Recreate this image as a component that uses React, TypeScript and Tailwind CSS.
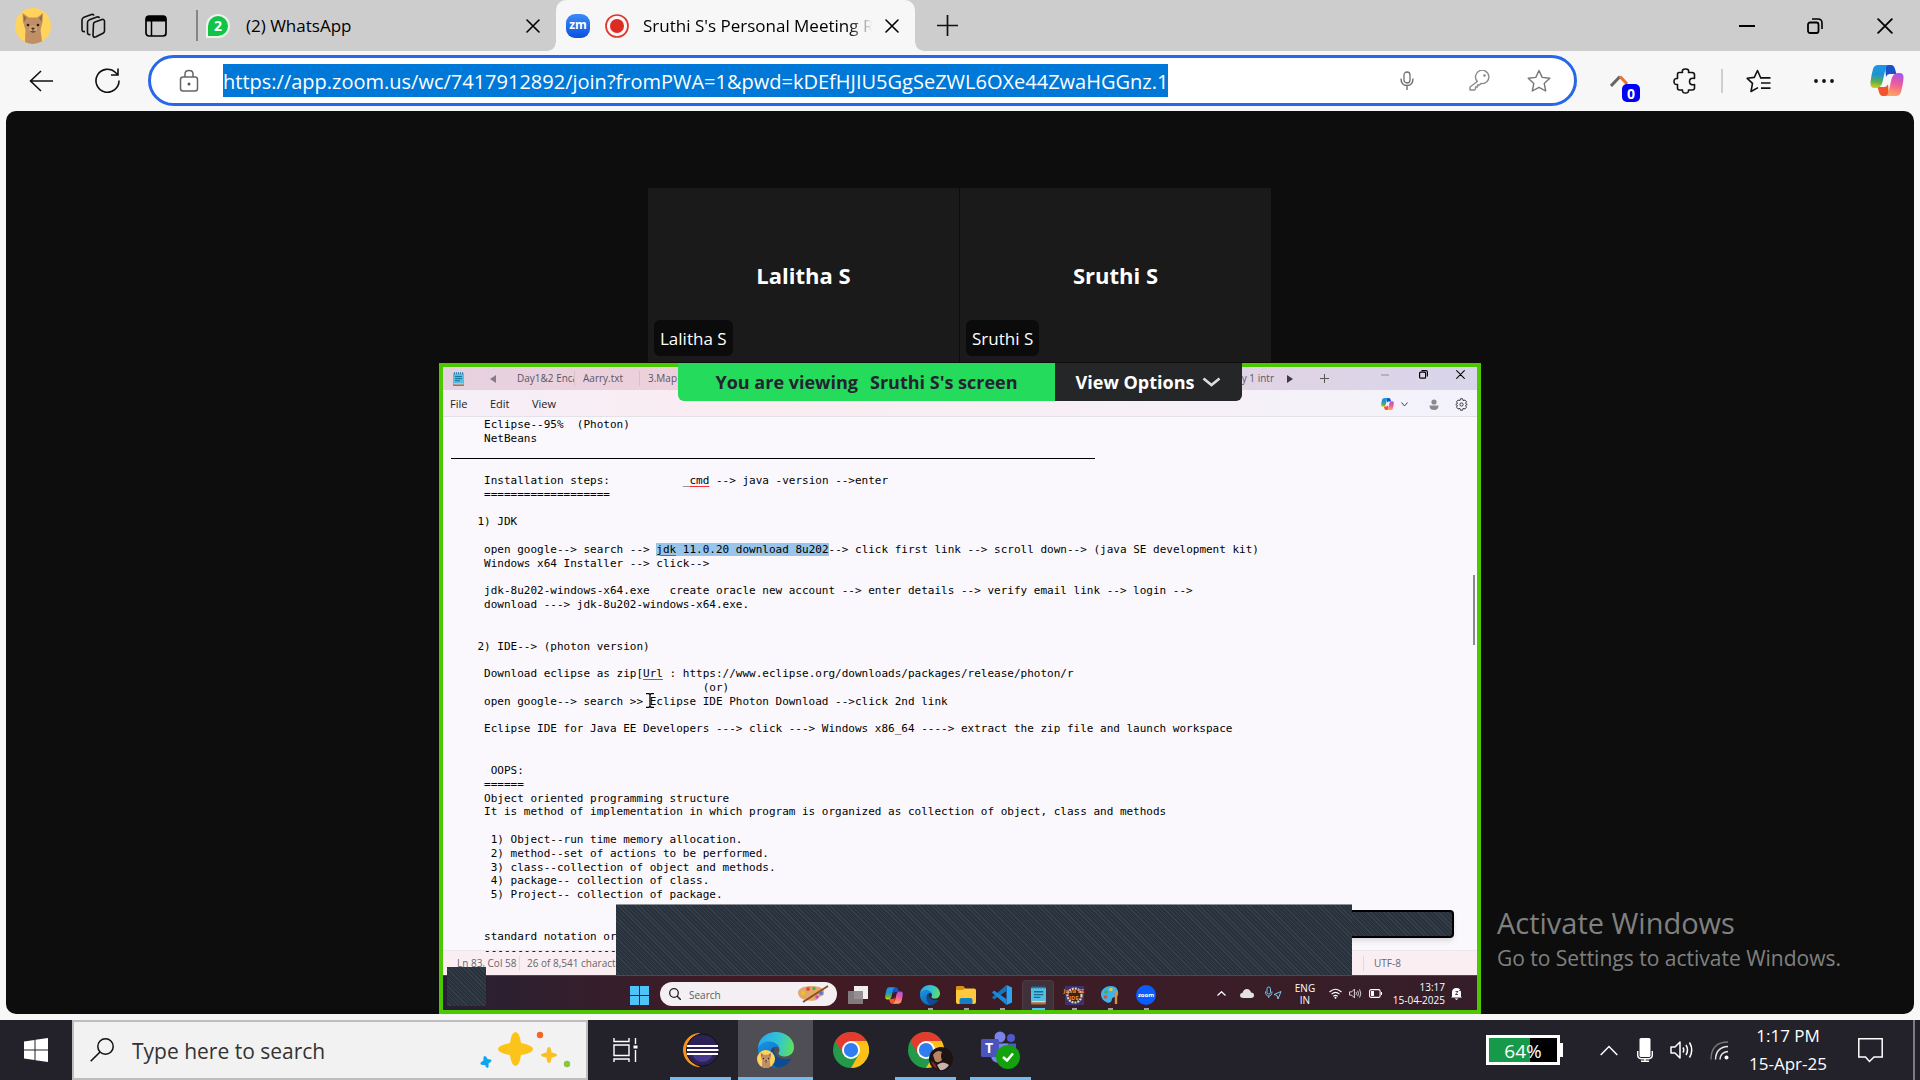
import React from "react";

const sans = "font-['Open_Sans','Noto_Sans',sans-serif]";

function Svg({ w, h, box, children, className = "" }: { w: number; h: number; box?: string; children: React.ReactNode; className?: string }) {
  return (
    <svg width={w} height={h} viewBox={box ?? `0 0 ${w} ${h}`} fill="none" aria-hidden="true" className={`shrink-0 ${className}`}>
      {children}
    </svg>
  );
}

function IconButton({ label, className, children }: { label: string; className: string; children: React.ReactNode }) {
  return (
    <button type="button" aria-label={label} className={`relative flex shrink-0 items-center justify-center self-stretch ${className}`}>
      {children}
    </button>
  );
}

function Cat({ size }: { size: number }) {
  return (
    <Svg w={size} h={size} box="0 0 36 36">
      <circle cx="18" cy="18" r="18" fill="#ffd35c" />
      <path d="M10 34 L10.500 22 L8 14 L7.500 5 L14 9.500 H22 L28 5 L27.500 14 L25.500 22 L27 33.500 Q18 38 10 34Z" fill="#c09064" />
      <path d="M8.500 7 L11.500 10 L9 14Z M27 7 L24 10 L26.500 14Z" fill="#96683f" />
      <ellipse cx="18" cy="21" rx="4" ry="3.500" fill="#cfa37a" />
      <circle cx="13" cy="17" r="1.300" fill="#2b2018" />
      <circle cx="23" cy="17" r="1.300" fill="#2b2018" />
      <path d="M16.500 20 H19.500 L18 21.500Z M18 21 V23 M15.500 23.500 Q18 25 20.500 23.500" stroke="#3b2a1c" strokeWidth=".7" fill="#3b2a1c" />
    </Svg>
  );
}

function Cross({ size, width = 1.6 }: { size: number; width?: number }) {
  return (
    <Svg w={size} h={size} box="0 0 14 14">
      <path d="M1 1 L13 13 M13 1 L1 13" stroke="currentColor" strokeWidth={width} strokeLinecap="round" />
    </Svg>
  );
}

function Copilot({ w, h, id }: { w: number; h: number; id: string }) {
  return (
    <Svg w={w} h={h} box="0 0 34 31">
      <defs>
        <linearGradient id={`${id}a`} x1="8" y1="0" x2="5" y2="24" gradientUnits="userSpaceOnUse">
          <stop stopColor="#1a96ee" />
          <stop offset=".4" stopColor="#1f93d0" />
          <stop offset=".7" stopColor="#5bb04a" />
          <stop offset="1" stopColor="#f6cf12" />
        </linearGradient>
        <linearGradient id={`${id}b`} x1="28" y1="8" x2="22" y2="31" gradientUnits="userSpaceOnUse">
          <stop stopColor="#a457ee" />
          <stop offset=".45" stopColor="#ef5a9c" />
          <stop offset="1" stopColor="#ffa75a" />
        </linearGradient>
      </defs>
      <path d="M15 0 H21 Q24 0 25 4 L26.500 9 H20 Q17 9 16 12Z" fill="#1a50c8" />
      <path d="M19 31 H13 Q10 31 9 27 L7.500 22 H14 Q17 22 18 19Z" fill="#f0552e" />
      <path d="M8 0 H19 Q16.500 0 15.500 4 L12.500 17 Q11 23 6 23 H4 Q0 23 .5 17 Q1.500 9 3 4 Q4.300 0 8 0Z" fill={`url(#${id}a)`} />
      <path d="M26 31 H15 Q17.500 31 18.500 27 L21.500 14 Q23 8 28 8 H30 Q34 8 33.500 14 Q32.500 22 31 27 Q29.700 31 26 31Z" fill={`url(#${id}b)`} />
    </Svg>
  );
}

function Edge({ size, id }: { size: number; id: string }) {
  return (
    <Svg w={size} h={size} box="0 0 36 36">
      <defs>
        <linearGradient id={`${id}t`} x1="1" y1="10" x2="36" y2="18" gradientUnits="userSpaceOnUse">
          <stop stopColor="#2aa9ee" />
          <stop offset=".55" stopColor="#34c6cf" />
          <stop offset="1" stopColor="#62e352" />
        </linearGradient>
        <linearGradient id={`${id}m`} x1="4" y1="12" x2="16" y2="34" gradientUnits="userSpaceOnUse">
          <stop stopColor="#1590dd" />
          <stop offset="1" stopColor="#1268b8" />
        </linearGradient>
      </defs>
      <path d="M0 17 C0 7 8 0 18 0 C28 0 36 7 36 15 C36 21 32 24.500 27 24.500 C23 24.500 20.500 23 20.500 21.500 C20.500 20.500 21.500 20 21.500 18 C21.500 13 16 10 11 10 C5 10 1 13.500 0 17Z" fill={`url(#${id}t)`} />
      <path d="M0 17 C1 12 6 9.500 11 9.500 C16 9.500 20 12 21 15.500 C15 13 12 18 12 22 C12 30 20 33 23 35 C11 39 0 30 0 17Z" fill={`url(#${id}m)`} />
      <path d="M12 22 C12 19 14 16 16.500 15 C14 24 22 29 33 26.500 Q33.500 27 32 29 C29 33 25 35.300 20 35.800 C14 34 12 27 12 22Z" fill="#0d4b93" />
    </Svg>
  );
}

function Chrome() {
  return (
    <Svg w={36} h={36} box="0 0 48 48">
      <circle cx="24" cy="24" r="24" fill="#229a49" />
      <path d="M24 12 H44.800 A24 24 0 0 1 24 48 L34.400 30Z" fill="#fbc116" />
      <path d="M3.200 12 L13.600 30 L24 12 H44.800 A24 24 0 0 0 3.200 12Z" fill="#e33b2e" />
      <circle cx="24" cy="24" r="12" fill="#fff" />
      <circle cx="24" cy="24" r="9.500" fill="#2f7df0" />
    </Svg>
  );
}

function NotepadIcon({ w, h }: { w: number; h: number }) {
  return (
    <Svg w={w} h={h} box="0 0 16 20">
      <rect x="0" y="2" width="16" height="17" rx="1" fill="#53bfe3" />
      <rect x="0" y="17.500" width="16" height="2.500" rx="1" fill="#b5683a" />
      <path d="M1 17.200 H15" stroke="#e8eef2" strokeWidth="1" />
      <path d="M2 0 V3 M5 0 V3 M8 0 V3 M11 0 V3 M14 0 V3" stroke="#1b6c98" strokeWidth="1.300" />
      <path d="M3 6.500 H13 M3 9.500 H13 M3 12.500 H10" stroke="#166a96" strokeWidth="1.400" />
    </Svg>
  );
}

function WhatsAppBadge() {
  return (
    <div className="flex size-6 shrink-0 items-center justify-center rounded-full rounded-bl-none bg-[#eaf5ec]">
      <span className="flex size-5 items-center justify-center rounded-full rounded-bl-sm bg-[#12c445] text-[14px] leading-none font-bold text-white">2</span>
    </div>
  );
}

function TabStrip() {
  return (
    <header className="flex h-[51px] items-center bg-[#cdcdcd] text-black">
      <IconButton label="Profile" className="w-[66px]"><Cat size={36} /></IconButton>
      <IconButton label="Workspaces" className="w-[54px]">
        <Svg w={26} h={26}>
          <g stroke="#111" strokeWidth="1.600" strokeLinejoin="round">
            <path d="M13.500 11 Q13.500 9.500 15 9 L22 6.500 Q24.500 6 24.500 8.500 V18 Q24.500 19.500 23 20.200 L16 23.800 Q13 25 13 22Z" />
            <path d="M10.500 21.500 Q7.500 22 7.500 19.500 V9.500 Q7.500 7.500 9.500 6.700 L17 4 Q19 3.500 19.500 5" />
            <path d="M5 18.500 Q2 19 2 16.500 V7 Q2 5 4 4.200 L11.500 1.500 Q13.500 1 14 2.500" />
          </g>
        </Svg>
      </IconButton>
      <IconButton label="Tab actions" className="w-[72px]">
        <Svg w={22} h={22}>
          <rect x="1" y="1" width="20" height="20" rx="3" stroke="#000" strokeWidth="1.700" />
          <path d="M1 3.500 Q1 1 4 1 H18 Q21 1 21 3.500 V6.500 H1Z" fill="#000" />
          <path d="M6.500 6 V21" stroke="#000" strokeWidth="1.500" />
        </Svg>
      </IconButton>
      <div className="ml-1 h-[31px] w-0.5 bg-[#858585]" />
      <div className="flex w-[358px] items-center self-stretch pl-2">
        <WhatsAppBadge />
        <span className="ml-4 flex-1 truncate text-[17px]">(2) WhatsApp</span>
        <IconButton label="Close tab" className="w-[46px]"><Cross size={14} /></IconButton>
      </div>
      <div className="relative flex w-[359px] items-center self-stretch rounded-t-[10px] bg-[#f7f7f7] pl-2.5">
        <span className="absolute bottom-0 -left-2 size-2 bg-[radial-gradient(circle_at_0_0,transparent_7px,#f7f7f7_8px)]" />
        <span className="absolute -right-2 bottom-0 size-2 bg-[radial-gradient(circle_at_100%_0,transparent_7px,#f7f7f7_8px)]" />
        <span className="flex size-6 items-center justify-center rounded-[9px] bg-linear-to-b from-[#3b8bf5] to-[#0b4fe0] pb-0.5 text-[12px] leading-none font-bold text-white">zm</span>
        <Svg w={24} h={24} className="ml-[15px]">
          <circle cx="12" cy="12" r="11" stroke="#e0352b" strokeWidth="1.700" />
          <circle cx="12" cy="12" r="7" fill="#dc2c22" />
        </Svg>
        <span className="ml-3.5 w-[229px] overflow-hidden mask-r-from-90% text-[17px] whitespace-nowrap">Sruthi S's Personal Meeting Room</span>
        <IconButton label="Close tab" className="w-[40px]"><Cross size={14} /></IconButton>
      </div>
      <IconButton label="New tab" className="w-16">
        <Svg w={21} h={21}><path d="M10.500 0 V21 M0 10.500 H21" stroke="#111" strokeWidth="1.700" /></Svg>
      </IconButton>
      <div className="flex-1" />
      <IconButton label="Minimize" className="w-[66px]"><Svg w={16} h={2}><path d="M0 1 H16" stroke="#000" strokeWidth="2" /></Svg></IconButton>
      <IconButton label="Restore" className="w-[70px]">
        <Svg w={16} h={16}>
          <rect x="1" y="4.500" width="10.500" height="10.500" rx="2" stroke="#000" strokeWidth="1.800" />
          <path d="M5 1 H11 Q15 1 15 5 V11" stroke="#000" strokeWidth="1.600" />
        </Svg>
      </IconButton>
      <IconButton label="Close window" className="w-[70px]"><Cross size={16} /></IconButton>
    </header>
  );
}

function Toolbar() {
  return (
    <div className="flex h-[60px] items-center bg-[#f7f7f7] pr-[3px] pb-px">
      <IconButton label="Back" className="ml-2 w-[66px]">
        <Svg w={24} h={22}><path d="M12 1 L1.500 11 L12 21 M1.500 11 H24" stroke="#111" strokeWidth="1.600" /></Svg>
      </IconButton>
      <IconButton label="Refresh" className="w-[66px]">
        <Svg w={25} h={25}><path d="M24 12.500 A11.500 11.500 0 1 1 20.500 4.500 L22.500 6.500 M23 .5 V7 H16" stroke="#111" strokeWidth="1.600" /></Svg>
      </IconButton>
      <div className="ml-2 flex h-[51px] min-w-0 flex-1 items-center rounded-full border-3 border-[#2668e8] bg-white">
        <IconButton label="Site information" className="w-[72px] pl-1">
          <Svg w={20} h={24}>
            <rect x="1.500" y="8" width="17" height="14" rx="2.500" stroke="#666" strokeWidth="1.500" />
            <path d="M6 8 V5 Q6 1.500 10 1.500 Q14 1.500 14 5 V8" stroke="#666" strokeWidth="1.500" />
            <circle cx="10" cy="15" r="1.500" fill="#555" />
          </Svg>
        </IconButton>
        <input
          aria-label="Address"
          readOnly
          value="https://app.zoom.us/wc/7417912892/join?fromPWA=1&pwd=kDEfHJIU5GgSeZWL6OXe44ZwaHGGnz.1"
          className="h-[33px] min-w-0 [field-sizing:content] bg-[#0078d7] pt-0.5 text-[20px] text-white outline-none"
        />
        <div className="flex-1" />
        <IconButton label="Voice search" className="w-[94px]">
          <Svg w={14} h={19}>
            <rect x="4" y="1" width="6" height="11" rx="3" stroke="#707070" strokeWidth="1.300" />
            <path d="M1 7.500 Q1 14.500 7 14.500 Q13 14.500 13 7.500 M7 14.500 V19" stroke="#707070" strokeWidth="1.400" />
          </Svg>
        </IconButton>
        <IconButton label="Passwords" className="w-[50px]">
          <Svg w={21} h={21}>
            <path d="M8.300 11.500 A6.700 6.700 0 1 1 12 13.500 L10.500 15 H8.500 V17 H6.500 V19 L5.500 20 H1 V17Z" stroke="#8a8a8a" strokeWidth="1.400" strokeLinejoin="round" />
            <circle cx="15.500" cy="5.500" r="1.300" fill="#8a8a8a" />
          </Svg>
        </IconButton>
        <IconButton label="Add to favorites" className="w-[70px]">
          <Svg w={24} h={24}>
            <path d="M12 1.500 L15.200 8.400 L22.800 9.300 L17.200 14.400 L18.700 22 L12 18.300 L5.300 22 L6.800 14.400 L1.200 9.300 L8.800 8.400Z" stroke="#777" strokeWidth="1.400" strokeLinejoin="round" />
          </Svg>
        </IconButton>
      </div>
      <IconButton label="Extension" className="ml-2 w-[68px]">
        <Svg w={18} h={12}>
          <path d="M1 11 L10 1.500" stroke="#666" strokeWidth="3" />
          <path d="M10 1.500 L17 9" stroke="#f07030" strokeWidth="3" />
        </Svg>
        <span className="absolute top-[33px] left-[37px] flex h-[18px] w-[18px] items-center justify-center rounded-[5px] bg-[#0000f5] text-[14px] font-bold text-white">0</span>
      </IconButton>
      <IconButton label="Extensions" className="w-16">
        <Svg w={24} h={26}>
          <path d="M6 4.500 H9.500 Q8.500 1 12.500 1 Q16.500 1 15.500 4.500 H19 Q21.500 4.500 21.500 7 V10.500 Q16.500 9.500 16.500 13.500 Q16.500 17.500 21.500 16.500 V20 Q21.500 22 19 22 H15.500 Q16 25 12.500 25 Q9 25 9.500 22 H6.500 Q4.500 22 4.500 20 V16.500 Q1 17 1 13.500 Q1 10 4.500 10.500 V6.500 Q4.500 4.500 6 4.500Z" stroke="#111" strokeWidth="1.600" strokeLinejoin="round" />
        </Svg>
      </IconButton>
      <div className="mx-1 h-6 w-0.5 bg-[#cfcfcf]" />
      <IconButton label="Favorites" className="w-16">
        <Svg w={26} h={24}>
          <path d="M14.500 8.500 L11.500 1.500 L8.300 8.400 L1.200 9.300 L6.500 14.400 L5 22.500 L12 18.600" stroke="#111" strokeWidth="1.600" strokeLinejoin="round" />
          <path d="M14 8.800 H24.500 M15 14 H24.500 M15 19.200 H24.500" stroke="#111" strokeWidth="1.700" />
        </Svg>
      </IconButton>
      <IconButton label="Settings and more" className="w-[66px]">
        <Svg w={20} h={4}><g fill="#111"><circle cx="2" cy="2" r="1.900" /><circle cx="10" cy="2" r="1.900" /><circle cx="18" cy="2" r="1.900" /></g></Svg>
      </IconButton>
      <IconButton label="Copilot" className="w-[60px]"><Copilot w={34} h={31} id="main" /></IconButton>
    </div>
  );
}

function Tile({ name }: { name: string }) {
  return (
    <div className="relative flex h-[174px] w-[311px] items-center justify-center bg-[#1a1a1a] text-white">
      <span className="text-[22px] font-bold">{name}</span>
      <span className="absolute bottom-1.5 left-1.5 flex h-9 items-center rounded-md bg-[#0b0b0b] px-1.5 pt-0.5 text-[17px]">{name}</span>
    </div>
  );
}

const squiggle = "underline decoration-red-500 decoration-1 underline-offset-2";

const lines: React.ReactNode[] = [
  "     Eclipse--95%  (Photon)",
  "     NetBeans",
  <span key="r" className="block h-3 w-[644px] border-b border-black" />,
  "",
  <React.Fragment key="c">{"     Installation steps:           _"}<span className={squiggle}>cmd</span>{" --> java -version -->enter"}</React.Fragment>,
  "     ===================",
  "",
  "    1) JDK",
  "",
  <React.Fragment key="j">{"     open google--> search --> "}<span className="bg-[#99c5ea]"><span className={squiggle}>jdk</span> 11.0.20 download 8u202</span>{"--> click first link --> scroll down--> (java SE development kit)"}</React.Fragment>,
  "     Windows x64 Installer --> click-->",
  "",
  "     jdk-8u202-windows-x64.exe   create oracle new account --> enter details --> verify email link --> login -->",
  "     download ---> jdk-8u202-windows-x64.exe.",
  "",
  "",
  "    2) IDE--> (photon version)",
  "",
  <React.Fragment key="u">{"     Download eclipse as zip["}<span className={squiggle}>Url</span>{" : https://www.eclipse.org/downloads/packages/release/photon/r"}</React.Fragment>,
  "                                      (or)",
  "     open google--> search >> Eclipse IDE Photon Download -->click 2nd link",
  "",
  "     Eclipse IDE for Java EE Developers ---> click ---> Windows x86_64 ----> extract the zip file and launch workspace",
  "",
  "",
  "      OOPS:",
  "     ======",
  "     Object oriented programming structure",
  "     It is method of implementation in which program is organized as collection of object, class and methods",
  "",
  "      1) Object--run time memory allocation.",
  "      2) method--set of actions to be performed.",
  "      3) class--collection of object and methods.",
  "      4) package-- collection of class.",
  "      5) Project-- collection of package.",
  "",
  "",
  "     standard notation or",
  "     ---------------------",
];

const hatch = "bg-[repeating-linear-gradient(45deg,#28313c_0,#28313c_2px,#36404b_2px,#36404b_3px)]";

function Banner() {
  return (
    <div className="absolute -top-1 left-[235px] z-10 flex h-[38px] overflow-hidden rounded-b-md text-[18px] font-bold whitespace-nowrap">
      <p className="flex w-[377px] items-center justify-center gap-3 bg-[#24db5b] text-[#232333]">
        <span>You are viewing</span>
        <span>Sruthi S's screen</span>
      </p>
      <button type="button" className="flex w-[187px] items-center justify-center gap-2 bg-[#242628] text-white">
        View Options
        <Svg w={19} h={10}><path d="M1.500 1.500 L9.500 8 L17.500 1.500" stroke="#ddd" strokeWidth="2.600" /></Svg>
      </button>
    </div>
  );
}

function NotepadTitle() {
  return (
    <div className="flex h-[23px] items-center bg-linear-to-r from-[#e6d2e0] via-[#efd0d8] via-30% to-[#d9d5ea] text-[10px] text-[#5d5562]">
      <span className="ml-2.5"><NotepadIcon w={11} h={14} /></span>
      <IconButton label="Scroll tabs left" className="ml-4 w-[25px]"><Svg w={6} h={8}><path d="M6 0 V8 L0 4Z" fill="#857b8a" /></Svg></IconButton>
      <span className="ml-3 w-[58px] overflow-hidden border-r border-[#d9bfca] whitespace-nowrap">Day1&amp;2 Enca</span>
      <span className="w-[65px] border-r border-[#d9bfca] pl-2">Aarry.txt</span>
      <span className="pl-2">3.Map</span>
      <span className="flex-1" />
      <span className="mr-2">Day 1 intr</span>
      <IconButton label="Scroll tabs right" className="mr-2 w-4"><Svg w={6} h={8}><path d="M0 0 V8 L6 4Z" fill="#3c3848" /></Svg></IconButton>
      <IconButton label="Add tab" className="mr-[25px] w-9"><Svg w={9} h={9}><path d="M4.500 0 V9 M0 4.500 H9" stroke="#555" /></Svg></IconButton>
      <IconButton label="Minimize" className="w-9 pb-2"><Svg w={8} h={2}><path d="M0 1 H8" stroke="#999" strokeWidth="1.200" /></Svg></IconButton>
      <IconButton label="Restore" className="w-10 pb-2 text-black">
        <Svg w={9} h={9}><rect x=".6" y="2.200" width="6" height="6" rx="1" stroke="#000" strokeWidth="1.200" /><path d="M2.500 .6 H7 Q8.400 .6 8.400 2 V6.500" stroke="#000" strokeWidth="1.100" /></Svg>
      </IconButton>
      <IconButton label="Close" className="w-[34px] pb-2 text-black"><Cross size={9} /></IconButton>
    </div>
  );
}

function NotepadMenu() {
  return (
    <div className="flex h-[27px] items-center border-b border-[#e4e2e8] bg-linear-to-r from-[#f6eff7] via-[#faecf1] via-30% to-[#f3f3fb] pt-0.5 text-[11px] text-[#222]">
      <button type="button" className="ml-[7px] w-10 text-left">File</button>
      <button type="button" className="w-[42px] text-left">Edit</button>
      <button type="button" className="w-10 text-left">View</button>
      <span className="flex-1" />
      <Copilot w={13} h={12} id="np" />
      <IconButton label="Copilot options" className="w-5"><Svg w={7} h={5}><path d="M.5 .5 L3.500 4 L6.500 .5" stroke="#444" /></Svg></IconButton>
      <IconButton label="Account" className="ml-1.5 w-7"><Svg w={10} h={11}><circle cx="5" cy="3" r="2.600" fill="#8b8b8b" /><path d="M.5 6.500 H9.500 Q9.500 11 5 11 Q.5 11 .5 6.500Z" fill="#8b8b8b" /></Svg></IconButton>
      <IconButton label="Settings" className="mr-[3px] w-[26px]">
        <Svg w={13} h={13} box="0 0 12 12">
          <path d="M5 .7 H7 L7.500 2.400 L9.200 1.900 L10.600 3.500 L9.700 5 L11.300 6 L9.700 7 L10.600 8.500 L9.200 10.100 L7.500 9.600 L7 11.300 H5 L4.500 9.600 L2.800 10.100 L1.400 8.500 L2.300 7 L.7 6 L2.300 5 L1.400 3.500 L2.800 1.900 L4.500 2.400Z" stroke="#333" strokeWidth=".9" strokeLinejoin="round" />
          <circle cx="6" cy="6" r="1.500" stroke="#333" strokeWidth=".9" />
        </Svg>
      </IconButton>
    </div>
  );
}

function Slot({ label, children, run = true, active = false }: { label: string; children: React.ReactNode; run?: boolean; active?: boolean }) {
  return (
    <button type="button" aria-label={label} className="relative flex w-9 shrink-0 items-center justify-center self-stretch">
      {active && <span className="absolute inset-x-0.5 top-1 bottom-0 rounded-t border border-b-0 border-[#4d3a44] bg-[#40303a]" />}
      <span className="relative pt-1">{children}</span>
      {run && <span className={active ? "absolute bottom-0 h-0.5 w-[13px] bg-[#4cc2ff]" : "absolute bottom-0 h-0.5 w-[5px] bg-[#a89ca2]"} />}
    </button>
  );
}

function Waves({ w, h, color }: { w: number; h: number; color: string }) {
  return (
    <Svg w={w} h={h} box="0 0 24 20">
      <path d="M1 7 H5 L10 2 V18 L5 13 H1Z" stroke={color} strokeWidth="1.500" strokeLinejoin="round" />
      <path d="M13 7.500 Q14.500 10 13 12.500 M16 5 Q19 10 16 15 M19.500 2.500 Q24 10 19.500 17.500" stroke={color} strokeWidth="1.500" />
    </Svg>
  );
}

function RemoteTaskbar() {
  return (
    <div className="flex h-[35px] items-center border-t border-[#58424c] bg-linear-to-r from-[#272033] via-[#421a23] via-30% to-[#351e29] pl-[178px] text-white">
      <Slot label="Start" run={false}>
        <Svg w={19} h={19}>
          <path d="M0 0 H9 V9 H0Z M10 0 H19 V9 H10Z M0 10 H9 V19 H0Z M10 10 H19 V19 H10Z" fill="#4fc3f7" />
        </Svg>
      </Slot>
      <label className="mt-0.5 mr-[3px] ml-[3px] flex h-6 w-[177px] shrink-0 items-center rounded-full bg-[#f3eff2] pr-2 pl-[9px]">
        <Svg w={12} h={12}><circle cx="5" cy="5" r="4.300" stroke="#222" strokeWidth="1.300" /><path d="M8 8 L12 12" stroke="#222" strokeWidth="1.500" /></Svg>
        <input aria-label="Search" placeholder="Search" className="ml-2 min-w-0 flex-1 bg-transparent pt-0.5 text-[10px] placeholder:text-[#5c5a5e]" />
        <Svg w={32} h={18}>
          <path d="M15 1 C25 1 28 5 27 9 C26 12 22 11 21 13 C20 16 16 16 12 15.500 C4 15 1 11 1 7.500 C1 3 8 1 15 1Z" fill="#e2a86b" />
          <path d="M31 1 L6 17" stroke="#8c4b20" strokeWidth="1.800" />
          <circle cx="6" cy="8" r="2" fill="#f0c419" /><circle cx="11" cy="4" r="2" fill="#e04a3a" /><circle cx="17" cy="3.500" r="1.700" fill="#4caf50" /><circle cx="24" cy="8" r="2" fill="#4a7be0" /><circle cx="20" cy="12" r="1.800" fill="#c44ad0" />
        </Svg>
      </label>
      <Slot label="Task view" run={false}><Svg w={20} h={18}><rect x="6" y="0" width="14" height="13" fill="#f1eef0" /><rect x="0" y="5" width="15" height="13" fill="#8b8589" fillOpacity=".9" /></Svg></Slot>
      <Slot label="Copilot" run={false}><Copilot w={18} h={17} id="rt" /></Slot>
      <Slot label="Edge"><Edge size={20} id="re" /></Slot>
      <Slot label="File Explorer">
        <Svg w={20} h={18}><path d="M0 2 Q0 0 2 0 H7 L9 2.500 H18 Q20 2.500 20 4.500 V16 Q20 18 18 18 H2 Q0 18 0 16Z" fill="#ffc83d" /><path d="M0 3 V2 Q0 0 2 0 H7 L9 2.500 L7 4 H0Z" fill="#d9920f" /><path d="M3.500 18 V14 Q3.500 12 5.500 12 H14.500 Q16.500 12 16.500 14 V18Z" fill="#1480c4" /></Svg>
      </Slot>
      <Slot label="Visual Studio Code">
        <Svg w={20} h={20}>
          <path d="M14.500 0 L20 2.500 V17.500 L14.500 20Z" fill="#2aa4f0" />
          <path d="M14.500 0 V6 L2 14.500 L0 12.500Z" fill="#0f78c0" />
          <path d="M14.500 20 V14 L2 5.500 L0 7.500Z" fill="#1a8ad8" />
        </Svg>
      </Slot>
      <Slot label="Notepad" active><NotepadIcon w={15} h={20} /></Slot>
      <Slot label="Java EE IDE">
        <span className="relative flex size-[19px] items-center justify-center bg-[#3f3070]">
          <Svg w={19} h={19} className="absolute"><circle cx="9.500" cy="9.500" r="7" stroke="#d8d3c8" strokeWidth="2.200" strokeDasharray="2 1" fill="#3a2418" /></Svg>
          <span className="relative text-center text-[6px] leading-[7px] font-bold whitespace-nowrap text-[#ef8a2c]">Java EE<br />IDE</span>
        </span>
      </Slot>
      <Slot label="Paint">
        <Svg w={19} h={20}><path d="M10 1 C16 1 18 6 17 10 C16 13 12 11 11 14 C10.500 18 8 18 6 17.500 C2 16 0 13 0 9.500 C0 4 5 1 10 1Z" fill="#3fb2e8" /><circle cx="5" cy="7" r="1.800" fill="#3fae49" /><circle cx="10" cy="4.500" r="1.800" fill="#f4c430" /><circle cx="4.500" cy="12" r="1.800" fill="#e04a3a" /><path d="M15 6 V19" stroke="#d8913c" strokeWidth="2.400" /></Svg>
      </Slot>
      <Slot label="Zoom"><span className="flex size-5 items-center justify-center rounded-full bg-[#0b5cff] pb-px text-[6px] leading-none font-bold">zoom</span></Slot>
      <span className="flex-1" />
      <IconButton label="Hidden icons" className="w-6"><Svg w={9} h={5}><path d="M.5 4.500 L4.500 .7 L8.500 4.500" stroke="#fff" strokeWidth="1.200" /></Svg></IconButton>
      <IconButton label="OneDrive" className="w-7"><Svg w={14} h={9}><path d="M3.500 9 Q0 9 0 6.300 Q0 4 2.500 3.800 Q3.500 0 7 0 Q10 0 11 3.500 Q14 3.500 14 6.300 Q14 9 11 9Z" fill="#e4e0e4" /></Svg></IconButton>
      <IconButton label="Privacy" className="w-6">
        <Svg w={17} h={14}><rect x="2" y="1" width="3.500" height="7" rx="1.700" stroke="#7cc6e8" /><path d="M.5 5.500 Q.5 10 3.700 10 Q7 10 7 5.500 M3.700 10 V12 M16 5.500 L9 8.500 L12 9.500 L13 13Z" stroke="#7cc6e8" /></Svg>
      </IconButton>
      <span className="w-10 pt-0.5 text-center text-[10px] leading-[12px]">ENG<br />IN</span>
      <IconButton label="Network" className="w-5"><Svg w={13} h={11}><path d="M.5 4 Q6.500 -1.500 12.500 4 M2.500 6.200 Q6.500 2.500 10.500 6.200 M4.300 8.300 Q6.500 6.300 8.700 8.300" stroke="#fff" strokeWidth="1.100" /><circle cx="6.500" cy="9.700" r="1" fill="#fff" /></Svg></IconButton>
      <IconButton label="Volume" className="w-5"><Waves w={13} h={11} color="#fff" /></IconButton>
      <IconButton label="Battery" className="w-5"><Svg w={13} h={9}><rect x=".6" y=".6" width="10.500" height="7.800" rx="1.500" stroke="#fff" strokeWidth="1.100" /><path d="M2 2 H5 V7 H2Z M12 3 H13 V6 H12Z" fill="#fff" /></Svg></IconButton>
      <span className="w-[60px] pt-0.5 text-right text-[10px] leading-[13px] whitespace-nowrap">13:17<br />15-04-2025</span>
      <IconButton label="Notifications" className="mr-3.5 ml-1.5 w-3"><Svg w={12} h={13}><path d="M1 9.500 V5.500 Q1 1 5.500 1 Q10 1 10 5.500 V9.500 L11 10.500 H0Z M3.500 11.500 H7.500 L5.500 13Z" fill="#fff" /><path d="M8 0 H11.500 L8.500 3.500 H12 M4.500 4.500 H7 L4.500 7.500 H7" stroke="#351e29" strokeWidth=".8" /></Svg></IconButton>
    </div>
  );
}

function SharedScreen() {
  return (
    <section className="relative mt-px w-full max-w-[1042px] border-4 border-[#4cc800] bg-[#faf8fc]">
      <Banner />
      <NotepadTitle />
      <NotepadMenu />
      <div className="h-[533px] pt-px">
        <div className="grid h-[539px] auto-rows-fr pl-2 font-['DejaVu_Sans_Mono',monospace] text-[11px] leading-[13px] text-black">
          {lines.map((line, i) => (
            <div key={i} className="flex min-h-0 items-center whitespace-pre"><span>{line}</span></div>
          ))}
        </div>
      </div>
      <div className="flex h-[25px] items-center border-t border-[#eee6ee] bg-[#faeef3] text-[10px] text-[#666]">
        <span className="ml-[14px] w-[63px] border-r border-[#ddd]">Ln 83, Col 58</span>
        <span className="ml-[7px]">26 of 8,541 characters</span>
        <span className="flex-1" />
        <span className="w-[114px] border-l border-[#e6d6de] pl-2.5">UTF-8</span>
      </div>
      <RemoteTaskbar />
      <Svg w={8} h={15} className="absolute top-[326px] left-[203px]"><path d="M0 .7 H3 L4 1.700 L5 .7 H8 M4 1.500 V13.500 M0 14.300 H3 L4 13.300 L5 14.300 H8" stroke="#000" strokeWidth="1.300" /></Svg>
      <span className="absolute top-[208px] right-0.5 h-[70px] w-0.5 bg-[#8c8a90]" />
      <div className={`absolute right-[23px] bottom-[72px] h-7 w-[120px] rounded-sm border-2 border-black shadow-md ${hatch}`} />
      <div className={`absolute right-[125px] bottom-[35px] left-[173px] h-[71px] border-t border-[#8d9299] ${hatch}`} />
      <div className={`absolute bottom-1 left-1 h-[39px] w-[39px] ${hatch}`} />
    </section>
  );
}

function Task({ label, children, state = "run" }: { label: string; children: React.ReactNode; state?: "idle" | "run" | "active" }) {
  return (
    <button type="button" aria-label={label} className={`relative flex w-[75px] shrink-0 items-center justify-center self-stretch ${state === "active" ? "bg-[#4f4e55]" : ""}`}>
      {children}
      {state !== "idle" && <span className={`absolute bottom-0 h-[3px] bg-[#76b9ed] ${state === "active" ? "w-full" : "w-[61px]"}`} />}
    </button>
  );
}

function Taskbar() {
  return (
    <footer className="flex h-[60px] items-center bg-[#23222a] text-white">
      <IconButton label="Start" className="w-[72px]">
        <Svg w={24} h={24}><path d="M0 3.400 L10.500 1.900 V11.500 H0Z M11.500 1.800 L24 0 V11.500 H11.500Z M0 12.500 H10.500 V22.100 L0 20.600Z M11.500 12.500 H24 V24 L11.500 22.200Z" fill="#fff" /></Svg>
      </IconButton>
      <label className="flex w-[516px] items-center self-stretch border-2 border-[#bdbdbd] bg-[#f2f2f2] pr-3 pl-4">
        <Svg w={24} h={24}><circle cx="15.500" cy="8.500" r="7.700" stroke="#111" strokeWidth="1.500" /><path d="M10 14 L.7 23.300" stroke="#111" strokeWidth="1.600" /></Svg>
        <input aria-label="Type here to search" placeholder="Type here to search" className="ml-[18px] min-w-0 flex-1 bg-transparent pt-1 text-[21px] placeholder:text-[#333]" />
        <Svg w={94} h={38}>
          <path d="M35.500 1 Q39.500 1 41 12 Q53 14.500 53 18 Q53 22 41 24 Q39.500 35 35.500 35 Q31.500 35 30 24 Q18 22 18 18 Q18 14.500 30 12 Q31.500 1 35.500 1Z" fill="#fcc419" />
          <path d="M69 16 Q71 16 71.500 21.500 Q77 22.500 77 24 Q77 25.500 71.500 26.500 Q71 32 69 32 Q67 32 66.500 26.500 Q61 25.500 61 24 Q61 22.500 66.500 21.500 Q67 16 69 16Z" fill="#fbbf24" />
          <path d="M4.500 25 Q6.500 25 7.500 28 Q11 28 11.500 29.500 Q11.500 31 8.500 32.500 Q9 36.500 7.500 37 Q6 37 5 34 Q.5 34 .3 32.500 Q.3 31 3.500 29.500 Q3 25.500 4.500 25Z" fill="#0ea5f5" />
          <circle cx="60" cy="4" r="3.200" fill="#f4652a" />
          <circle cx="87" cy="33" r="3.200" fill="#8bc53f" />
        </Svg>
      </label>
      <IconButton label="Task view" className="w-[75px]">
        <Svg w={26} h={24}><path d="M1 0 V3.500 H16 V0 M1 7 H16 V17.500 H1Z M1 24 V21 H16 V24 M22.500 0 V6 M22.500 12 V24" stroke="#fff" strokeWidth="1.400" /><path d="M20.500 7.500 H24.500 V10.500 H20.500Z" fill="#fff" /></Svg>
      </IconButton>
      <Task label="Eclipse">
        <Svg w={36} h={34}>
          <path d="M17 0 A17 17 0 0 0 17 34 A22 22 0 0 1 17 0Z" fill="#f7941e" />
          <circle cx="19.500" cy="17" r="16" fill="#2c2255" stroke="#111" />
          <path d="M9 21 H30 Q27 29 19.500 29 Q12 29 9 21Z" fill="#46388a" />
          <path d="M4 13 H35 M4 17 H35.500 M4 21 H35" stroke="#fff" strokeWidth="2" />
        </Svg>
      </Task>
      <Task label="Edge" state="active">
        <Edge size={36} id="te" />
        <span className="absolute bottom-3 left-[19px]"><Cat size={18} /></span>
      </Task>
      <Task label="Chrome" state="idle"><Chrome /></Task>
      <Task label="Chrome profile">
        <Chrome />
        <Svg w={24} h={24} className="absolute right-[10px] bottom-[9px]">
          <circle cx="12" cy="12" r="12" fill="#1c1413" />
          <path d="M4 8 Q8 2 13 5 Q11 9 13 13 Q9 17 6 14Z" fill="#b98362" />
          <path d="M8 18 Q14 13 20 18 Q16 24 11 23Z" fill="#c9b3ac" />
          <path d="M2 14 Q7 16 8 22 Q3 19 2 14Z" fill="#7d2b28" />
        </Svg>
      </Task>
      <Task label="Teams">
        <Svg w={40} h={38}>
          <circle cx="19" cy="6" r="5.500" fill="#7b83eb" /><circle cx="30" cy="7" r="4" fill="#5059c9" />
          <path d="M22 12.500 H35 V22 Q35 28 29 28 H22Z" fill="#5059c9" />
          <path d="M10 12.500 H27 V24 Q27 32 19 32 Q10 32 10 24Z" fill="#7b83eb" />
          <rect x="0" y="8" width="18" height="18" rx="1.500" fill="#4b53bc" />
          <circle cx="27" cy="26" r="12" fill="#13a10e" /><path d="M22 26 L26 29.500 L32 22.500" stroke="#fff" strokeWidth="2.600" />
        </Svg>
        <span className="absolute top-[21px] left-[22px] text-[14px] leading-none font-bold">T</span>
      </Task>
      <span className="flex-1" />
      <div className="mr-7 flex items-center">
        <span className="flex h-[30px] w-[74px] items-center justify-center border-3 border-white bg-linear-to-r from-[#169a4a] from-60% to-black to-60% pt-0.5 text-[19px]">64%</span>
        <span className="h-3.5 w-[3px] bg-white" />
      </div>
      <IconButton label="Show hidden icons" className="w-9"><Svg w={18} h={11}><path d="M.7 10 L9 1.500 L17.300 10" stroke="#fff" strokeWidth="1.500" /></Svg></IconButton>
      <IconButton label="Microphone" className="w-9"><Svg w={16} h={24}><rect x="2.500" y="0" width="11" height="19" rx="1.500" fill="#fff" /><path d="M.7 13 V17 Q.7 20.700 4.500 20.700 H11.500 Q15.300 20.700 15.300 17 V13 M8 20.500 V23.300 M4 23.300 H12" stroke="#fff" strokeWidth="1.400" /></Svg></IconButton>
      <IconButton label="Volume" className="w-[38px]"><Waves w={24} h={20} color="#fff" /></IconButton>
      <IconButton label="Network" className="w-9">
        <Svg w={19} h={19}>
          <path d="M1 18.500 Q1 1 18 1" stroke="#777" strokeWidth="1.400" /><path d="M5.500 18.500 Q6 6 18 5.500 M10 18.500 Q10.500 11 18 10.500" stroke="#e5e5e5" strokeWidth="1.500" /><circle cx="16.500" cy="16.500" r="2" fill="#fff" />
        </Svg>
      </IconButton>
      <time className="ml-[5px] w-[92px] text-center text-[17px] leading-7 whitespace-nowrap">1:17 PM<br />15-Apr-25</time>
      <IconButton label="Action center" className="w-[72px]"><Svg w={25} h={25}><path d="M.8 .8 H24.200 V19 H16 L11.500 23.500 L7.500 19 H.8Z" stroke="#fff" strokeWidth="1.500" /></Svg></IconButton>
      <span className="mr-[5px] ml-[7px] w-0.5 self-stretch bg-[#7c7c80]" />
    </footer>
  );
}

export default function App() {
  return (
    <div className={`flex min-h-screen flex-col bg-[#f7f7f7] ${sans}`}>
      <TabStrip />
      <Toolbar />
      <main className="relative mx-1.5 mb-1.5 flex flex-1 flex-col items-center overflow-hidden rounded-[10px] bg-[#0d0d0d] pt-[77px]">
        <div className="mr-px flex gap-px">
          <Tile name="Lalitha S" />
          <Tile name="Sruthi S" />
        </div>
        <SharedScreen />
        <div className="absolute right-[73px] bottom-10 text-[#808080]">
          <p className="text-[29px] leading-[38px]">Activate Windows</p>
          <p className="text-[21px] leading-8">Go to Settings to activate Windows.</p>
        </div>
      </main>
      <Taskbar />
    </div>
  );
}
